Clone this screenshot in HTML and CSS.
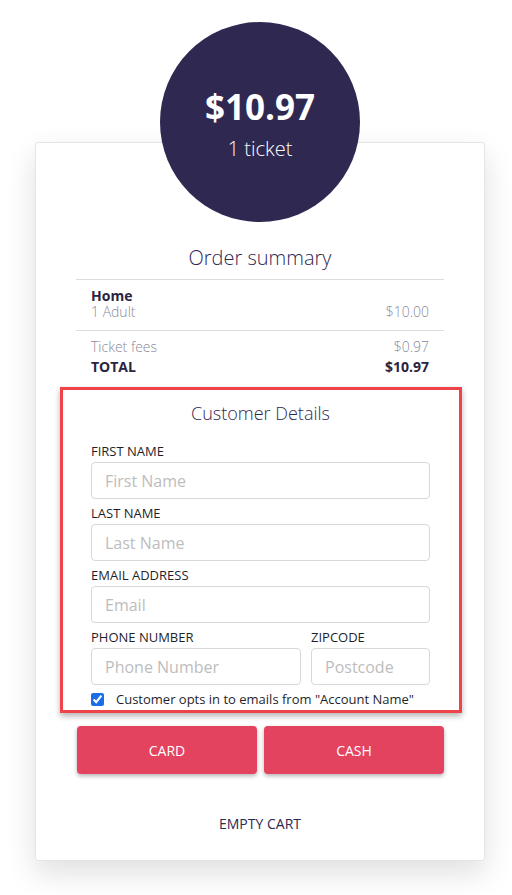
FILE: index.html
```html
<!DOCTYPE html>
<html>
<head>
<meta charset="utf-8">
<link rel="stylesheet" href="styles.css">
</head>
<body>
<div class="page">
  <div class="card">
    <div class="badge">
      <div class="badge-amount">$10.97</div>
      <div class="badge-count">1 ticket</div>
    </div>
    <div class="summary">
      <h2 class="summary-title">Order summary</h2>
      <div class="summary-item">
        <div class="item-name">Home</div>
        <div class="row light"><span>1 Adult</span><span>$10.00</span></div>
      </div>
      <div class="summary-totals">
        <div class="row light fees"><span>Ticket fees</span><span>$0.97</span></div>
        <div class="row strong"><span>TOTAL</span><span>$10.97</span></div>
      </div>
    </div>
    <form class="details">
      <h3 class="details-title">Customer Details</h3>
      <label class="field-label">FIRST NAME</label>
      <input class="field" type="text" placeholder="First Name">
      <label class="field-label">LAST NAME</label>
      <input class="field" type="text" placeholder="Last Name">
      <label class="field-label">EMAIL ADDRESS</label>
      <input class="field" type="text" placeholder="Email">
      <div class="split">
        <div class="col">
          <label class="field-label">PHONE NUMBER</label>
          <input class="field" type="text" placeholder="Phone Number">
        </div>
        <div class="col">
          <label class="field-label">ZIPCODE</label>
          <input class="field" type="text" placeholder="Postcode">
        </div>
      </div>
      <label class="optin"><input type="checkbox" checked><span>Customer opts in to emails from "Account Name"</span></label>
    </form>
    <div class="pay">
      <button class="pay-btn" type="button">CARD</button>
      <button class="pay-btn" type="button">CASH</button>
    </div>
    <div class="empty">EMPTY CART</div>
  </div>
</div>
</body>
</html>
```

FILE: styles.css
```css
* { box-sizing: border-box; }
html, body { margin: 0; padding: 0; background: #fff; }
body { font-family: "Open Sans", "Noto Sans", sans-serif; color: #2f2851; }

.page { padding-top: 142px; padding-bottom: 34px; }

.card {
  width: 450px;
  margin-left: 35px;
  background: #fff;
  border: 1px solid #e4e4e4;
  border-radius: 3px;
  box-shadow: 0 12px 30px rgba(0,0,0,0.13);
  padding-bottom: 26px;
}

.badge {
  width: 200px;
  height: 200px;
  margin: -121px 0 0 124px;
  border-radius: 50%;
  background: #2f2851;
  color: #fff;
  display: flex;
  flex-direction: column;
  align-items: center;
  justify-content: center;
  padding-top: 4px;
}
.badge-amount { font-size: 35px; font-weight: 700; line-height: 44px; }
.badge-count { font-size: 20px; font-weight: 300; line-height: 28px; margin-top: 6px; }

.summary { margin: 22px 40px 0 40px; }
.summary-title {
  margin: 0;
  font-size: 20px;
  font-weight: 300;
  line-height: 28px;
  text-align: center;
  padding-bottom: 7px;
  border-bottom: 1px solid #dcdcdc;
}
.summary-item { padding: 8px 15px 10px; border-bottom: 1px solid #dcdcdc; }
.item-name { font-size: 14px; font-weight: 700; line-height: 16px; color: #2a2440; }
.row { display: flex; justify-content: space-between; font-size: 14px; line-height: 16px; }
.light { color: #8a8a98; font-weight: 300; }
.summary-totals { padding: 7px 15px 0; }
.fees { line-height: 18px; }
.strong { font-weight: 700; color: #2a2440; line-height: 20px; margin-top: 1px; }

.details {
  margin: 10px 0 0 24px;
  width: 402px;
  border: 3px solid #f04349;
  box-shadow: 0 3px 6px rgba(0,0,0,0.3);
  padding: 11px 29px 2px 28px;
  display: flex;
  flex-direction: column;
}
.details-title {
  margin: 0 0 17px;
  font-size: 18px;
  font-weight: 300;
  line-height: 25px;
  text-align: center;
  color: #2f2851;
}
.field-label {
  display: block;
  font-size: 13px;
  line-height: 16px;
  color: #1f1f2a;
  margin-bottom: 3px;
}
.field {
  display: block;
  width: 100%;
  height: 37px;
  margin: 0 0 6px;
  border: 1px solid #d8d8d8;
  border-radius: 4px;
  padding: 0 13px;
  font-family: inherit;
  font-size: 16px;
  color: #333;
  background: #fff;
  outline: none;
}
.field::placeholder { color: #bdbdbd; }
.split { display: grid; grid-template-columns: 1fr 119px; column-gap: 10px; }
.optin {
  display: flex;
  align-items: center;
  font-size: 13px;
  line-height: 18px;
  color: #1f1f2a;
  margin-top: -1px;
}
.optin input { width: 13px; height: 13px; margin: 0 12px 0 0; accent-color: #1a6fe8; }

.pay { display: flex; gap: 7px; margin: 13px 40px 0 41px; }
.pay-btn {
  flex: 1;
  height: 48px;
  border: none;
  border-radius: 4px;
  background: #e44360;
  color: #fff;
  font-family: inherit;
  font-size: 14px;
  box-shadow: 0 2px 4px rgba(0,0,0,0.3);
}
.empty {
  margin-top: 40px;
  text-align: center;
  font-size: 14px;
  line-height: 20px;
  color: #2f2851;
}
```
